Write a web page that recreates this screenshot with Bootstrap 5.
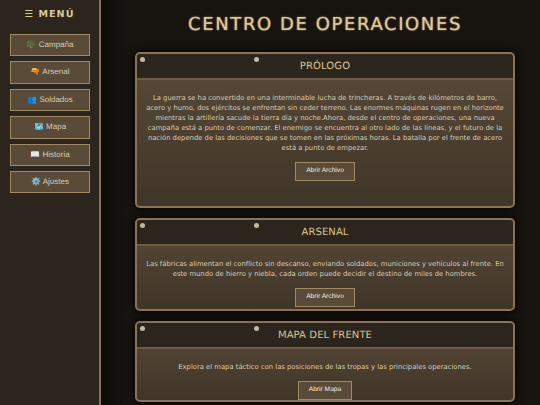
<!DOCTYPE html>
<html lang="es">
<head>
<meta charset="utf-8">
<title>Centro de Operaciones</title>
<link href="https://cdn.jsdelivr.net/npm/bootstrap@5.3.0/dist/css/bootstrap.min.css" rel="stylesheet">
<style>
html,body{height:100%;overflow:hidden}
body{background:#14110e;font-family:"DejaVu Sans",sans-serif;color:#d6cdb6;text-rendering:geometricPrecision}
.shell{height:405px;overflow:hidden}
.side{width:101px;flex:none;background:#2b251d;border-right:2px solid #8b7355;padding-top:7px;box-shadow:3px 0 10px #000}
.side-title{font-family:"DejaVu Sans",sans-serif;font-size:9.6px;font-weight:700;letter-spacing:1px;color:#d8c89a;text-align:center;margin:0 0 11px;line-height:16px}
.side-btn{display:block;width:80px;height:22.4px;margin:0 0 5px 10px;padding:0;background:#5a4a38;border:1px solid #a08a62;border-radius:0;color:#d6cdb6;font:8px/20px "Liberation Sans",sans-serif;text-align:center}
.main-area{flex:1;min-width:0;padding:0 25px 0 34px;background:linear-gradient(90deg,#0d0b09,#17130f 6%,#17130f)}
.page-title{font-family:"DejaVu Sans",sans-serif;font-size:18px;letter-spacing:1.6px;color:#dccb9c;text-align:center;margin:14px 0 16px;line-height:22px;text-shadow:0 0 2px #8b7355,0 0 1px #8b7355;font-weight:400}
.panel{position:relative;background:linear-gradient(#5a4a38,#3f3528);border:2px solid #8b7355;border-radius:5px;margin-bottom:10px;box-shadow:0 0 8px #000;overflow:hidden}
.panel-head{background:#2b251d;border-bottom:2px solid #6e5b43;height:26px;line-height:26px;text-align:center;font-size:10px;letter-spacing:.1px;color:#d8c48c}
.rivet{position:absolute;top:3px;width:5px;height:5px;border-radius:50%;background:#c4b9a3}
.r1{left:3px}.r2{left:117px}
.panel-body-x{padding:13px 8px 0;text-align:center;font-size:6.8px;line-height:10px;color:#d6cdb6}
.panel-body-x p{margin:0 0 9px}
.act-btn{display:inline-block;padding:0 10px;height:19.4px;background:#5a4a38;border:1.5px solid #a08a62;border-radius:0;color:#f5eddc;font:6.67px/16.4px "Liberation Sans",sans-serif}
.p1{height:156px}.p2{height:93px}
</style>
</head>
<body>
<div class="shell d-flex">
  <aside class="side">
    <h2 class="side-title">☰ MENÚ</h2>
    <a class="side-btn text-decoration-none" href="#">🪖 Campaña</a>
    <a class="side-btn text-decoration-none" href="#">🔫 Arsenal</a>
    <a class="side-btn text-decoration-none" href="#">👥 Soldados</a>
    <a class="side-btn text-decoration-none" href="#">🗺️ Mapa</a>
    <a class="side-btn text-decoration-none" href="#">📖 Historia</a>
    <a class="side-btn text-decoration-none" href="#">⚙️ Ajustes</a>
  </aside>
  <main class="main-area">
    <h1 class="page-title">CENTRO DE OPERACIONES</h1>
    <section class="panel p1">
      <span class="rivet r1"></span><span class="rivet r2"></span>
      <div class="panel-head">PRÓLOGO</div>
      <div class="panel-body-x">
        <p>La guerra se ha convertido en una interminable lucha de trincheras. A través de kilómetros de barro, acero y humo, dos ejércitos se enfrentan sin ceder terreno. Las enormes máquinas rugen en el horizonte mientras la artillería sacude la tierra día y noche.Ahora, desde el centro de operaciones, una nueva campaña está a punto de comenzar. El enemigo se encuentra al otro lado de las líneas, y el futuro de la nación depende de las decisiones que se tomen en las próximas horas. La batalla por el frente de acero está a punto de empezar.</p>
        <a class="act-btn text-decoration-none" href="#">Abrir Archivo</a>
      </div>
    </section>
    <section class="panel p2">
      <span class="rivet r1"></span><span class="rivet r2"></span>
      <div class="panel-head">ARSENAL</div>
      <div class="panel-body-x">
        <p>Las fábricas alimentan el conflicto sin descanso, enviando soldados, municiones y vehículos al frente. En este mundo de hierro y niebla, cada orden puede decidir el destino de miles de hombres.</p>
        <a class="act-btn text-decoration-none" href="#">Abrir Archivo</a>
      </div>
    </section>
    <section class="panel">
      <span class="rivet r1"></span><span class="rivet r2"></span>
      <div class="panel-head">MAPA DEL FRENTE</div>
      <div class="panel-body-x">
        <p>Explora el mapa táctico con las posiciones de las tropas y las principales operaciones.</p>
        <a class="act-btn text-decoration-none" href="#">Abrir Mapa</a>
      </div>
    </section>
  </main>
</div>
<script src="https://cdn.jsdelivr.net/npm/bootstrap@5.3.0/dist/js/bootstrap.bundle.min.js"></script>
</body>
</html>
